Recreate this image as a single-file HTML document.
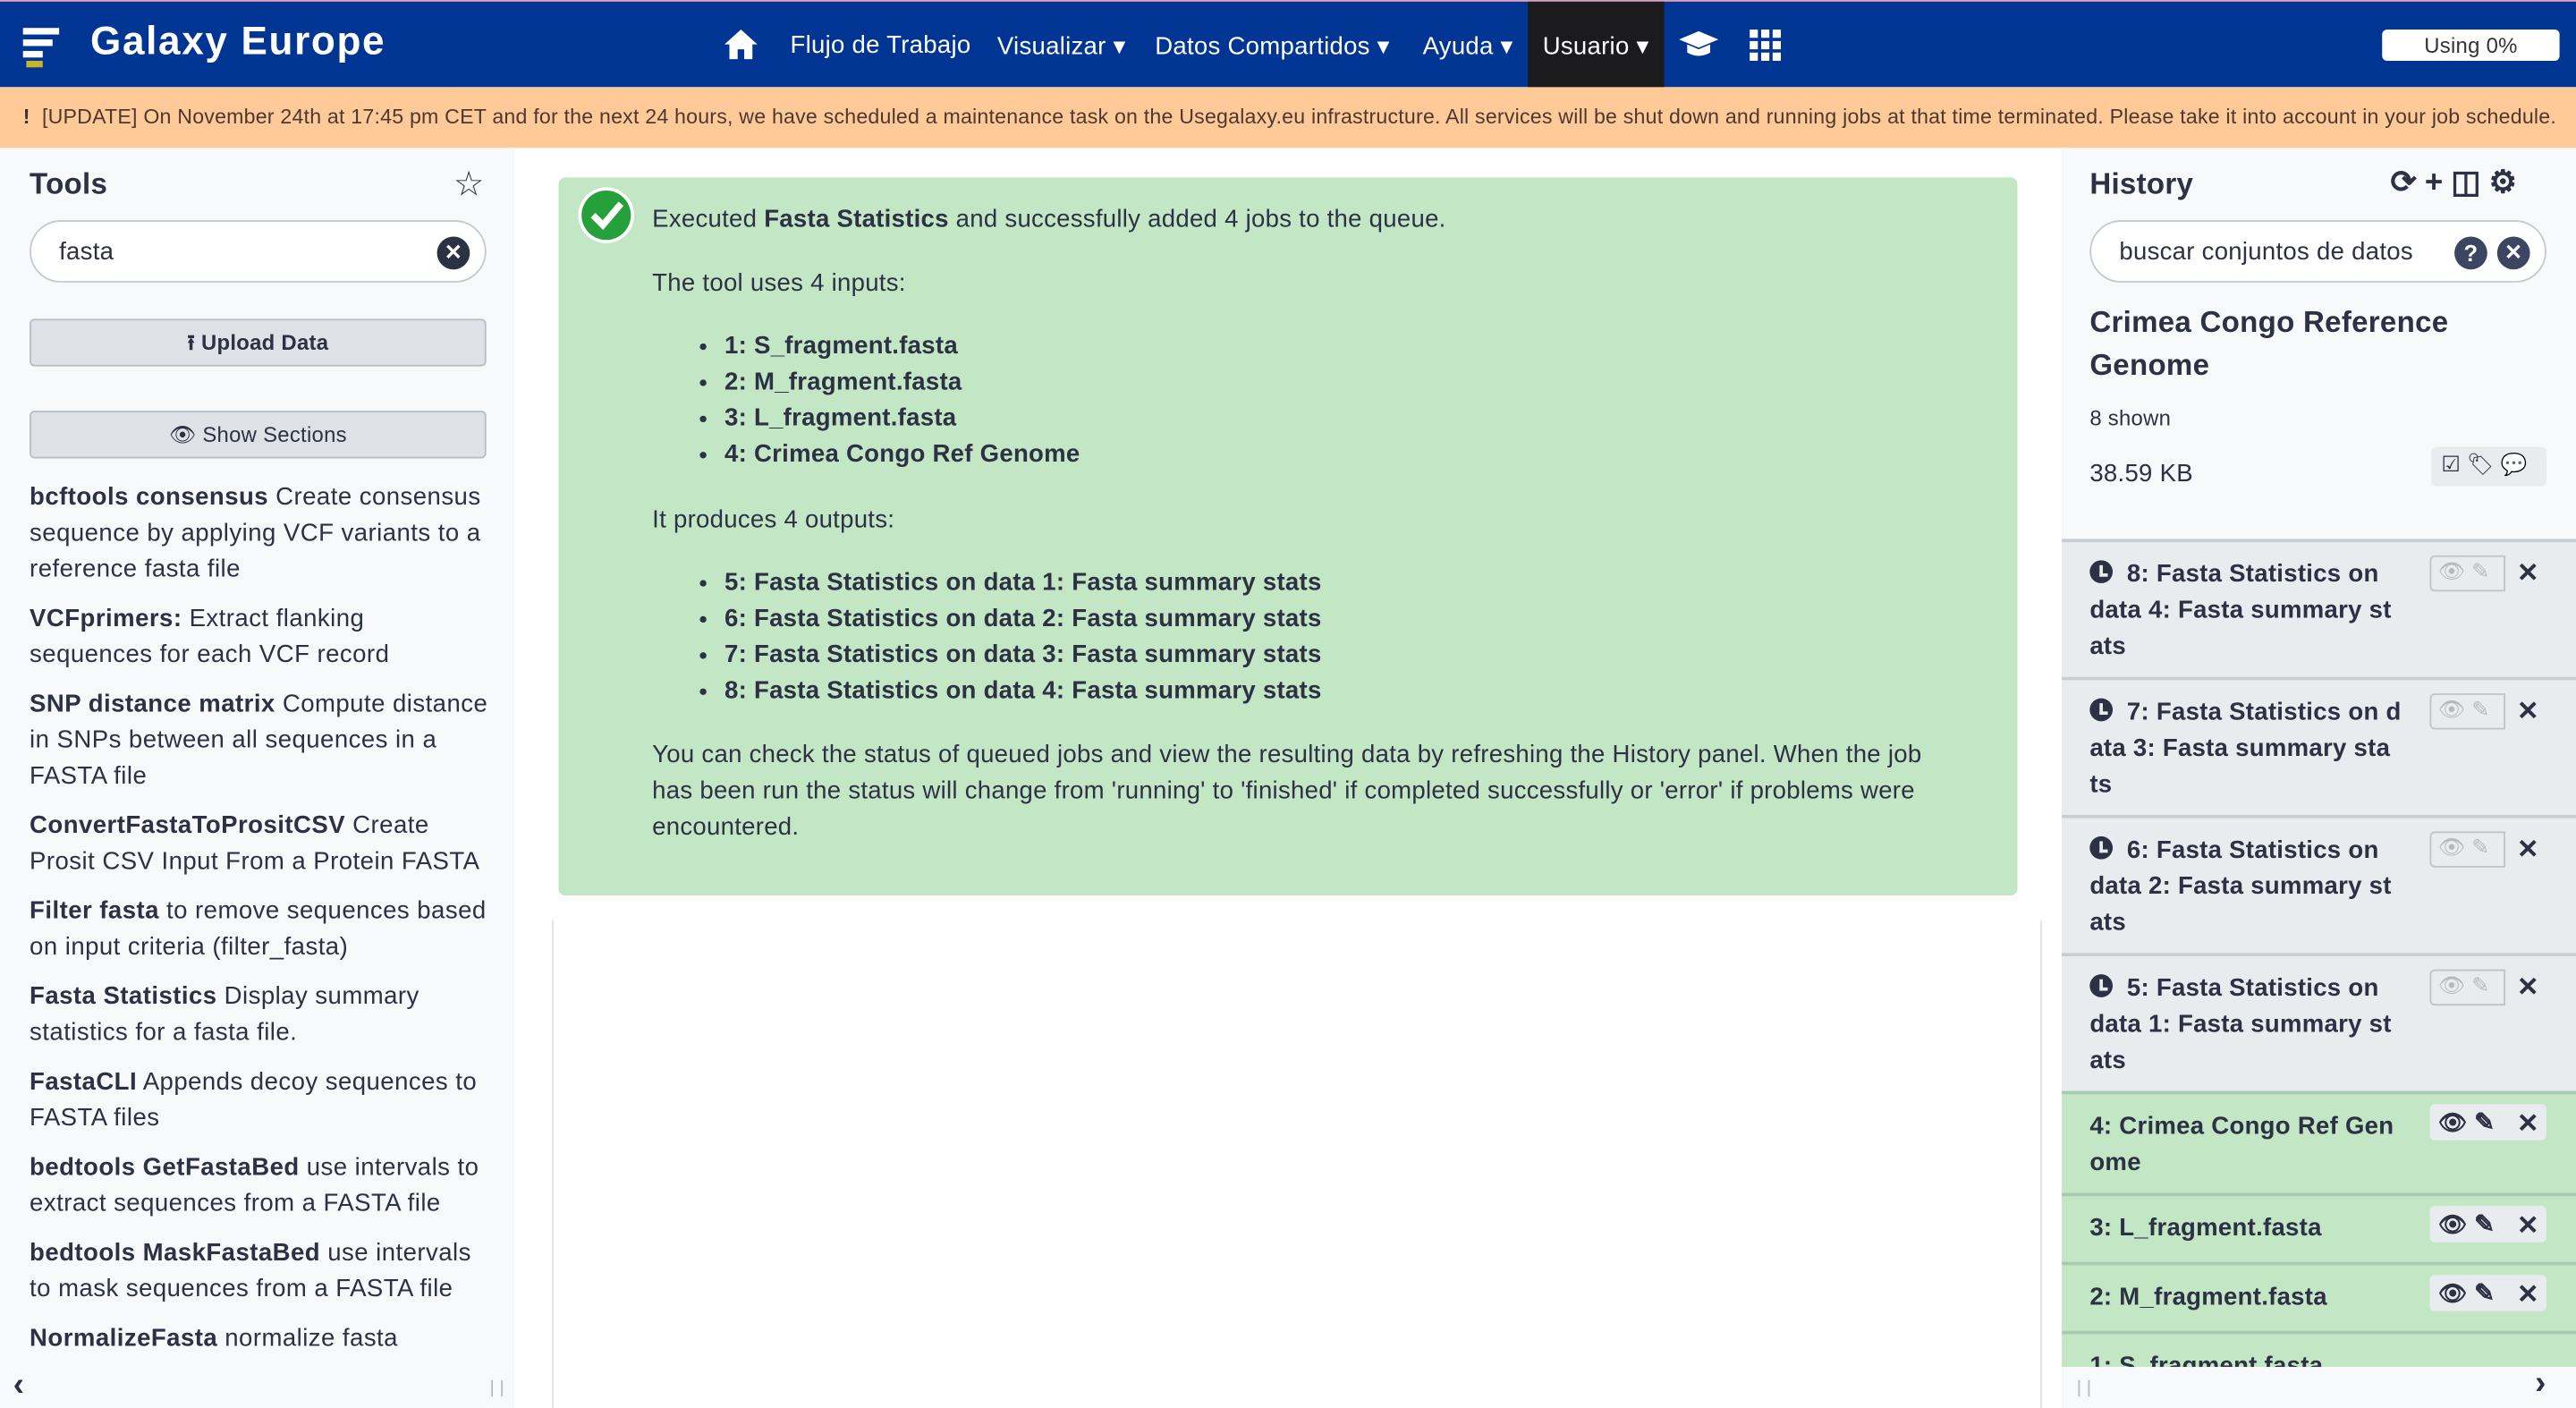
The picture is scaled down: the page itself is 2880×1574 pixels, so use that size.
<!DOCTYPE html>
<html><head><meta charset="utf-8"><style>
*{box-sizing:border-box;margin:0;padding:0}
html,body{width:2880px;height:1574px;overflow:hidden;background:#fff}
#w{width:1568px;height:857px;transform:scale(1.83673);transform-origin:0 0;position:relative;font-family:"Liberation Sans",sans-serif;color:#2c3143;font-size:15px;letter-spacing:0.15px}
.abs{position:absolute}
.nav{left:0;top:0;width:1568px;height:53px;background:#003594;border-top:1px solid #d9a0b8}
.nav .t{position:absolute;color:#fff;font-size:15px;top:18px}
.alert{left:0;top:53px;width:1568px;height:37px;background:#ffc998;font-size:12.6px;color:#4a3a30;padding:11px 0 0 14px;white-space:nowrap;letter-spacing:0.12px}
.left{left:0;top:90px;width:313px;height:767px;background:#f8f9fa}
.right{left:1255px;top:90px;width:313px;height:767px;background:#f8f9fa}
.btn{position:absolute;left:18px;width:278px;height:29px;background:#dee2e6;border:1px solid #b8bec5;border-radius:3px;font-size:13px;text-align:center;line-height:27px}
.tool{position:absolute;left:18px;width:280px;line-height:22px;font-size:15px;letter-spacing:0.25px}
.green{left:340px;top:108px;width:888px;height:437px;background:#c3e6c5;border-radius:4px}
.green p{position:absolute;left:57px;font-size:15px}
.green li{font-weight:bold;line-height:22px}
.green ul{position:absolute;left:101px}
.hi{position:absolute;left:0;width:313px;border-top:2px solid #c8cdd2;background:#e9ecef}
.hi.g{background:#c3e6c5;border-top-color:#a8cbb0}
.hi .tx{position:absolute;left:17px;top:9px;font-weight:bold;line-height:22px;width:195px;font-size:15px}
.ic{position:absolute;font-size:16px;font-weight:bold}
.clk{display:inline-block;width:14px;height:14px;border-radius:50%;background:#2c3143;vertical-align:-1px;position:relative}
.clk:after{content:"";position:absolute;left:6px;top:3px;width:3px;height:5px;border-left:2px solid #e9ecef;border-bottom:2px solid #e9ecef}
.fb{position:absolute;left:224px;width:46px;height:22px;border:1px solid #c0c4c8;border-radius:3px 0 0 3px;color:#b5b9be;font-size:13px;padding:1px 0 0 4px}
</style></head><body><div id="w">
<div class="abs nav">
 <div style="position:absolute;left:14px;top:16px;width:22px;height:4px;background:#fff"></div>
 <div style="position:absolute;left:14px;top:23px;width:18px;height:4px;background:#fff"></div>
 <div style="position:absolute;left:14px;top:30px;width:12px;height:4px;background:#fff"></div>
 <div style="position:absolute;left:16px;top:36px;width:10px;height:4px;background:#c9b52a"></div>
 <div class="t" style="left:55px;top:11px;font-size:24px;font-weight:bold;letter-spacing:0.9px">Galaxy Europe</div>
 <svg class="abs" style="left:440px;top:16px" width="22" height="20" viewBox="0 0 22 20"><path d="M11 1 L1 10 H4 V19 H9 V13 H13 V19 H18 V10 H21 Z" fill="#fff"/></svg>
 <div class="t" style="left:481px">Flujo de Trabajo</div>
 <div class="t" style="left:607px">Visualizar ▾</div>
 <div class="t" style="left:703px">Datos Compartidos ▾</div>
 <div class="t" style="left:866px">Ayuda ▾</div>
 <div style="position:absolute;left:930px;top:0;width:83px;height:53px;background:#1b1b1e"></div>
 <div class="t" style="left:939px">Usuario ▾</div>
 <svg class="abs" style="left:1021px;top:17px" width="26" height="18" viewBox="0 0 26 18"><path d="M13 1 L25 6 L13 11 L1 6 Z M6 9 V14 Q13 18 20 14 V9 L13 12 Z" fill="#fff"/></svg>
 <svg class="abs" style="left:1065px;top:17px" width="20" height="20" viewBox="0 0 20 20" fill="#fff"><rect x="0" y="0" width="5" height="5"/><rect x="7" y="0" width="5" height="5"/><rect x="14" y="0" width="5" height="5"/><rect x="0" y="7" width="5" height="5"/><rect x="7" y="7" width="5" height="5"/><rect x="14" y="7" width="5" height="5"/><rect x="0" y="14" width="5" height="5"/><rect x="7" y="14" width="5" height="5"/><rect x="14" y="14" width="5" height="5"/></svg>
 <div style="position:absolute;left:1450px;top:17px;width:108px;height:19px;background:#fff;border-radius:3px;font-size:13px;text-align:center;line-height:19px;color:#333">Using 0%</div>
</div>
<div class="abs alert"><b style="color:#333">!</b>&nbsp; [UPDATE] On November 24th at 17:45 pm CET and for the next 24 hours, we have scheduled a maintenance task on the Usegalaxy.eu infrastructure. All services will be shut down and running jobs at that time terminated. Please take it into account in your job schedule.</div>
<div class="abs left">
 <div class="abs" style="left:18px;top:12px;font-size:18px;font-weight:bold">Tools</div>
 <div class="abs" style="left:276px;top:10px;font-size:21px">☆</div>
 <div class="abs" style="left:18px;top:44px;width:278px;height:38px;background:#fff;border:1px solid #c5cad0;border-radius:19px;padding:10px 0 0 17px">fasta</div>
 <div class="abs" style="left:266px;top:54px;width:20px;height:20px;border-radius:50%;background:#2c3143;color:#fff;font-size:13px;text-align:center;line-height:20px;font-weight:bold">✕</div>
 <div class="btn" style="top:104px"><b>⭱ Upload Data</b></div>
 <div class="btn" style="top:160px">👁 Show Sections</div>
 <div class="tool" style="top:202px"><b>bcftools consensus</b> Create consensus sequence by applying VCF variants to a reference fasta file</div>
 <div class="tool" style="top:276px"><b>VCFprimers:</b> Extract flanking<br>sequences for each VCF record</div>
 <div class="tool" style="top:328px"><b>SNP distance matrix</b> Compute distance in SNPs between all sequences in a FASTA file</div>
 <div class="tool" style="top:402px"><b>ConvertFastaToPrositCSV</b> Create<br>Prosit CSV Input From a Protein FASTA</div>
 <div class="tool" style="top:454px"><b>Filter fasta</b> to remove sequences based on input criteria (filter_fasta)</div>
 <div class="tool" style="top:506px"><b>Fasta Statistics</b> Display summary statistics for a fasta file.</div>
 <div class="tool" style="top:558px"><b>FastaCLI</b> Appends decoy sequences to FASTA files</div>
 <div class="tool" style="top:610px"><b>bedtools GetFastaBed</b> use intervals to extract sequences from a FASTA file</div>
 <div class="tool" style="top:662px"><b>bedtools MaskFastaBed</b> use intervals<br>to mask sequences from a FASTA file</div>
 <div class="tool" style="top:714px"><b>NormalizeFasta</b> normalize fasta</div>
 <div class="abs" style="left:0;top:743px;width:313px;height:24px;background:#f8f9fa"></div>
 <div class="abs" style="left:8px;top:742px;font-size:20px;font-weight:bold">‹</div>
 <div class="abs" style="left:299px;top:750px;width:7px;height:10px;border-left:1px solid #bbb;border-right:1px solid #bbb"></div>
</div>
<div class="abs" style="left:336px;top:560px;width:1px;height:297px;background:#e3e3e3"></div>
<div class="abs" style="left:1242px;top:560px;width:1px;height:297px;background:#e3e3e3"></div>
<div class="abs green">
 <svg class="abs" style="left:11px;top:5px" width="36" height="36" viewBox="0 0 36 36"><circle cx="18" cy="18" r="17" fill="#fff"/><circle cx="18" cy="18" r="15" fill="#25a03a"/><path d="M10 18 L16 24 L27 11" stroke="#fff" stroke-width="4" fill="none"/></svg>
 <p style="top:17px">Executed <b>Fasta Statistics</b> and successfully added 4 jobs to the queue.</p>
 <p style="top:56px">The tool uses 4 inputs:</p>
 <ul style="top:92px"><li>1: S_fragment.fasta</li><li>2: M_fragment.fasta</li><li>3: L_fragment.fasta</li><li>4: Crimea Congo Ref Genome</li></ul>
 <p style="top:200px">It produces 4 outputs:</p>
 <ul style="top:236px"><li>5: Fasta Statistics on data 1: Fasta summary stats</li><li>6: Fasta Statistics on data 2: Fasta summary stats</li><li>7: Fasta Statistics on data 3: Fasta summary stats</li><li>8: Fasta Statistics on data 4: Fasta summary stats</li></ul>
 <p style="top:341px;width:800px;line-height:22px">You can check the status of queued jobs and view the resulting data by refreshing the History panel. When the job<br>has been run the status will change from 'running' to 'finished' if completed successfully or 'error' if problems were encountered.</p>
</div>
<div class="abs right">
 <div class="abs" style="left:17px;top:12px;font-size:18px;font-weight:bold">History</div>
 <div class="abs" style="left:200px;top:10px;font-size:19px;font-weight:bold;letter-spacing:5px">⟳+◫⚙</div>
 <div class="abs" style="left:17px;top:44px;width:278px;height:38px;background:#fff;border:1px solid #c5cad0;border-radius:19px;padding:10px 0 0 17px">buscar conjuntos de datos</div>
 <div class="abs" style="left:239px;top:54px;width:20px;height:20px;border-radius:50%;background:#3c4663;color:#fff;font-size:14px;text-align:center;line-height:20px;font-weight:bold">?</div>
 <div class="abs" style="left:265px;top:54px;width:20px;height:20px;border-radius:50%;background:#3c4663;color:#fff;font-size:13px;text-align:center;line-height:20px;font-weight:bold">✕</div>
 <div class="abs" style="left:17px;top:93px;font-size:18px;font-weight:bold;line-height:26px;width:260px">Crimea Congo Reference Genome</div>
 <div class="abs" style="left:17px;top:157px;font-size:13px">8 shown</div>
 <div class="abs" style="left:17px;top:190px;font-size:15px">38.59 KB</div>
 <div class="abs" style="left:225px;top:182px;width:70px;height:24px;background:#e9ecef;border-radius:3px;font-size:13px;padding:3px 0 0 6px">☑ 🏷 💬</div>
 <div class="hi" style="top:238px;height:84px"><div class="tx"><span class="clk"></span> &nbsp;8: Fasta Statistics on data 4: Fasta summary st ats</div></div>
 <div class="hi" style="top:322px;height:84px"><div class="tx"><span class="clk"></span> &nbsp;7: Fasta Statistics on d ata 3: Fasta summary sta ts</div></div>
 <div class="hi" style="top:406px;height:84px"><div class="tx"><span class="clk"></span> &nbsp;6: Fasta Statistics on data 2: Fasta summary st ats</div></div>
 <div class="hi" style="top:490px;height:84px"><div class="tx"><span class="clk"></span> &nbsp;5: Fasta Statistics on data 1: Fasta summary st ats</div></div>
 <div class="hi g" style="top:574px;height:62px"><div class="tx">4: Crimea Congo Ref Gen ome</div></div>
 <div class="hi g" style="top:636px;height:42px"><div class="tx">3: L_fragment.fasta</div></div>
 <div class="hi g" style="top:678px;height:42px"><div class="tx">2: M_fragment.fasta</div></div>
 <div class="hi g" style="top:720px;height:22px;overflow:hidden"><div class="tx">1: S_fragment.fasta</div></div>
 <div class="fb" style="top:248px">👁 ✎</div>
 <div class="fb" style="top:332px">👁 ✎</div>
 <div class="fb" style="top:416px">👁 ✎</div>
 <div class="fb" style="top:500px">👁 ✎</div>
 <div class="ic" style="left:277px;top:249px">✕</div><div class="ic" style="left:277px;top:333px">✕</div><div class="ic" style="left:277px;top:417px">✕</div><div class="ic" style="left:277px;top:501px">✕</div>
 <div class="abs" style="left:224px;top:582px;width:71px;height:22px;background:#e9ecef;border-radius:3px"></div>
 <div class="abs" style="left:224px;top:644px;width:71px;height:22px;background:#e9ecef;border-radius:3px"></div>
 <div class="abs" style="left:224px;top:686px;width:71px;height:22px;background:#e9ecef;border-radius:3px"></div>
 <div class="ic" style="left:277px;top:584px">✕</div><div class="ic" style="left:277px;top:646px">✕</div><div class="ic" style="left:277px;top:688px">✕</div>
 <div class="ic" style="left:251px;top:584px;font-size:15px">✎</div><div class="ic" style="left:251px;top:646px;font-size:15px">✎</div><div class="ic" style="left:251px;top:688px;font-size:15px">✎</div>
 <div class="ic" style="left:229px;top:585px;font-size:14px">👁</div><div class="ic" style="left:229px;top:647px;font-size:14px">👁</div><div class="ic" style="left:229px;top:689px;font-size:14px">👁</div>
 <div class="abs" style="left:0;top:742px;width:313px;height:25px;background:#f8f9fa"></div>
 <div class="abs" style="left:288px;top:741px;font-size:20px;font-weight:bold">›</div>
 <div class="abs" style="left:10px;top:750px;width:7px;height:10px;border-left:1px solid #bbb;border-right:1px solid #bbb"></div>
</div>
</div></body></html>
